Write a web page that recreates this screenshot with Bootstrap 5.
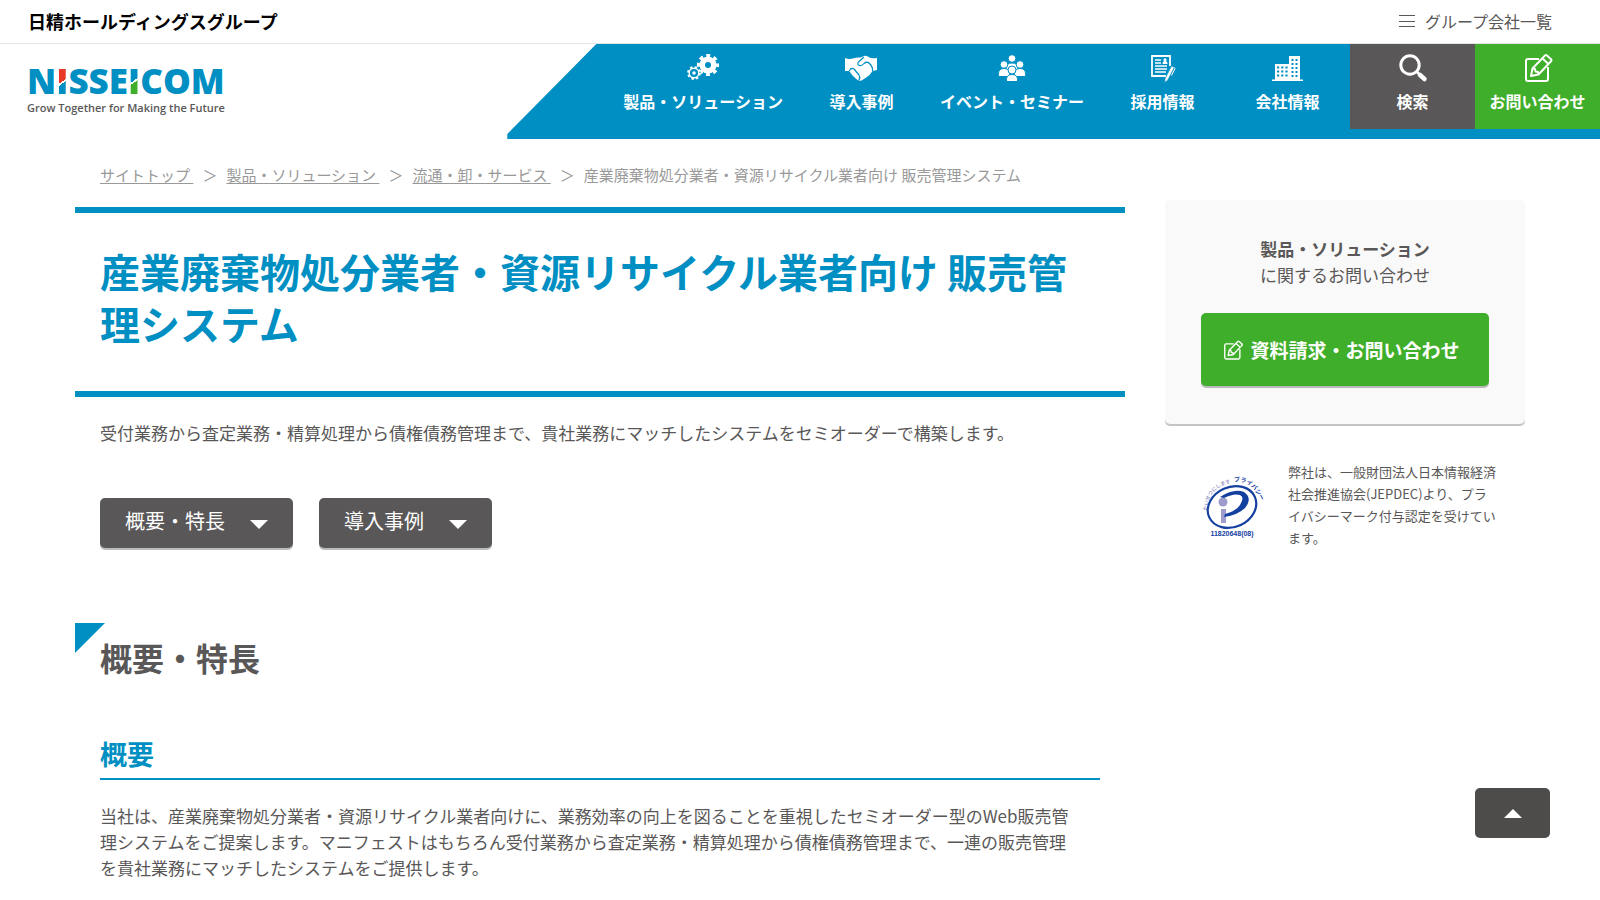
<!DOCTYPE html>
<html lang="ja">
<head>
<meta charset="utf-8">
<meta name="viewport" content="width=device-width, initial-scale=1">
<title>産業廃棄物処分業者・資源リサイクル業者向け 販売管理システム | NISSEICOM</title>
<link href="https://cdn.jsdelivr.net/npm/bootstrap@5.3.0/dist/css/bootstrap.min.css" rel="stylesheet">
<style>
:root { --nc-blue: #008fc2; --nc-green: #3fae2a; --nc-dark: #595757; --nc-red: #e83828; }
body { font-family: "Noto Sans CJK JP", sans-serif; color: var(--nc-dark); font-size: 17px; line-height: 26px; }
a { color: inherit; text-decoration: none; }
.topbar { height: 44px; padding: 0 48px 2px 28px; border-bottom: 1px solid #e6e6e6; }
.group-name { font-size: 18px; font-weight: 700; color: #000; }
.group-link { font-size: 16px; gap: 10px; }
.brand { padding: 17px 0 0 27px; font-family: "Open Sans", sans-serif; }
.brand-name { font-size: 35px; font-weight: 800; line-height: 40px; color: var(--nc-blue); }
.brand-name span { color: transparent; background-clip: text; -webkit-background-clip: text; }
.i-red { background-image: linear-gradient(145deg, var(--nc-red) 52%, #fff 52%, #fff 56%, var(--nc-blue) 56%); }
.i-green { background-image: linear-gradient(145deg, var(--nc-blue) 50%, #fff 50%, #fff 54%, var(--nc-green) 54%); }
.brand-tag { font-size: 11px; font-weight: 600; line-height: 14px; }
.gnav { background: var(--nc-blue); padding: 0 0 10px 100px; clip-path: polygon(89px 0, 100% 0, 100% 100%, 0 100%, 0 calc(100% - 5px)); }
.gnav a { min-width: 125px; height: 85px; padding: 8px 12px 0; color: #fff; font-size: 16px; font-weight: 700; line-height: 24px; white-space: nowrap; }
.gnav a.wide { padding-left: 16px; padding-right: 16px; }
.gnav svg { width: 32px; height: 32px; margin-bottom: 5px; }
.gnav .to-search { background: var(--nc-dark); }
.gnav .to-contact { background: var(--nc-green); }
.page { padding: 0 75px; gap: 40px; }
.side { width: 360px; padding-top: 61px; }
.crumbs { padding: 23px 25px 0; margin-bottom: 19px; font-size: 15px; color: #999; }
.crumbs a { text-decoration: underline; text-underline-offset: 2px; white-space: pre; }
.crumbs li + li::before { content: "＞"; margin: 0 9px; }
.page-title { border: solid var(--nc-blue); border-width: 6px 0; padding: 32px 25px 42px; margin: 0 0 23px; font-size: 40px; line-height: 52px; font-weight: 700; color: var(--nc-blue); }
.inner { padding: 0 25px; }
.jump { gap: 26px; margin-top: 52px; }
.jump a { height: 50px; padding: 0 25px 4px; gap: 25px; font-size: 20px; color: #fff; background: var(--nc-dark); border-radius: 5px; box-shadow: 0 2px 0 #bdbcbc; }
.jump svg { margin-top: 6px; }
.section-title { position: relative; margin: 75px 0 0; padding: 10px 25px 0; font-size: 32px; line-height: 48px; font-weight: 700; }
.section-title::before { content: ""; position: absolute; left: 0; top: 0; width: 30px; height: 30px; background: var(--nc-blue); clip-path: polygon(0 0, 100% 0, 0 100%); }
.sub-title { margin: 53px 0 23px; padding-bottom: 4px; border-bottom: 2px solid var(--nc-blue); font-size: 27px; line-height: 40px; font-weight: 700; color: var(--nc-blue); }
.inquiry { background: #f9f9f9; border-radius: 5px; padding: 36px 36px 38px; box-shadow: 0 2px 0 #c4c4c4; }
.inquiry a { height: 73px; margin-top: 25px; gap: 6px; background: var(--nc-green); color: #fff; font-size: 19px; font-weight: 700; border-radius: 5px; box-shadow: 0 2px 0 #b9b9b9; }
.privacy { padding: 37px 0 0 36px; gap: 20px; font-size: 13px; line-height: 22px; }
.page-top { position: fixed; right: 50px; bottom: 62px; width: 75px; height: 50px; border: 0; border-radius: 5px; background: #4d4c4a; }
</style>
</head>
<body>
<svg class="d-none" aria-hidden="true">
  <symbol id="pen" viewBox="0 0 32 32"><g fill="none" stroke="currentColor" stroke-width="2" stroke-linejoin="round"><path d="M17 7H6Q4 7 4 9v18q0 2 2 2h18q2 0 2-2V15"/><path d="M9 24l1.500-7.500L23 3.500q1-1 2 0l4 3.800q1 1 0 2L16.500 22.500z"/><path d="M10.500 16.500l2.500.5.500 2.500 2.500.500.500 2.500M20.500 6.500l6 5.500"/></g></symbol>
  <symbol id="tri-down" viewBox="0 0 18 9"><path fill="currentColor" d="M0 0h18L9 9z"/></symbol>
</svg>

<div class="topbar d-flex justify-content-between align-items-center">
  <a href="#" class="group-name">日精ホールディングスグループ</a>
  <a href="#" class="group-link d-flex align-items-center">
    <svg width="16" height="14" viewBox="0 0 16 14" stroke="#595757" stroke-width="1"><path d="M0 1.500h16M0 7.500h16M0 12.500h16"/></svg>グループ会社一覧</a>
</div>

<header class="d-flex justify-content-between">
  <a href="#" class="brand d-flex flex-column">
    <span class="brand-name">N<span class="i-red">I</span>SSE<span class="i-green">I</span>COM</span>
    <span class="brand-tag">Grow Together for Making the Future</span>
  </a>
  <nav class="gnav d-flex">
    <a href="#" class="wide d-flex flex-column align-items-center">
      <svg viewBox="0 0 32 32"><circle cx="21" cy="13" r="5.800" fill="none" stroke="#fff" stroke-width="5.500"/><circle cx="21" cy="13" r="9.500" fill="none" stroke="#fff" stroke-width="3.200" stroke-dasharray="3.900 3.561" stroke-dashoffset="2"/><circle cx="7" cy="21" r="6.500" fill="#008fc2"/><circle cx="7" cy="21" r="4.800" fill="none" stroke="#fff" stroke-width="1.400"/><circle cx="7" cy="21" r="6" fill="none" stroke="#fff" stroke-width="1.800" stroke-dasharray="2.400 2.312"/><circle cx="7" cy="21" r="1.800" fill="#fff"/></svg>
      製品・ソリューション</a>
    <a href="#" class="wide d-flex flex-column align-items-center">
      <svg viewBox="0 0 32 32"><path fill="#fff" d="M0 6q4 1.500 8 .500 4-1.500 7.500-1L19 4q2-.8 4 .8Q27 7 32 6v12l-4.500 1-3 4-4 3-4 2.500q-2 .8-4-.5L8 24l-4-5H0z"/><path fill="none" stroke="#008fc2" stroke-width="1.200" stroke-linecap="round" stroke-linejoin="round" d="M27.500 18.500Q28 15 24.500 11.500 22 9 19 11.500q-2 2.500-4.500 2-3-1-1-3.500l5-4.500M4.500 18.500q1.500-3 4.500-1.500l5 6q1.500 2.500 0 5"/></svg>
      導入事例</a>
    <a href="#" class="wide d-flex flex-column align-items-center">
      <svg viewBox="0 0 32 32"><g fill="#fff" stroke="#008fc2" stroke-width="1"><circle cx="16" cy="6.500" r="3.800"/><path d="M10.500 18v-3q0-4 5.500-4t5.500 4v3z"/><circle cx="8" cy="12.500" r="3.800"/><circle cx="24" cy="12.500" r="3.800"/><path d="M2.500 24.500v-3q0-5 5.500-5t5.500 5v3zM18.500 24.500v-3q0-5 5.500-5t5.500 5v3z"/><circle cx="16" cy="18" r="4"/><path d="M10.500 29.500v-2q0-5 5.500-5t5.500 5v2z"/></g></svg>
      イベント・セミナー</a>
    <a href="#" class="d-flex flex-column align-items-center">
      <svg viewBox="0 0 32 32"><path d="M23 14V4H5v20h14" fill="none" stroke="#fff" stroke-width="1.800"/><path d="M8 8h6M8 11h6M8 14h12M8 17h12M8 20h11" stroke="#fff" stroke-width="1.300"/><path d="M15.500 12q0-3 2.500-3t2.500 3z" fill="#fff"/><circle cx="18" cy="7.800" r="1.600" fill="#fff"/><path d="M24.500 14l2.800 1.500-6.500 12.500-3 2.500.3-4z" fill="#fff" stroke="#008fc2" stroke-width=".6"/><path d="M27.500 15.500l.5 1-3.500 7" stroke="#fff" fill="none"/></svg>
      採用情報</a>
    <a href="#" class="d-flex flex-column align-items-center">
      <svg viewBox="0 0 32 32"><path d="M0 29v-1.500h3V12h14V4h11v23.500h3V29z" fill="#fff"/><path d="M5 15.500h11M5 19.500h11M5 23.500h11" stroke="#008fc2" stroke-width="2.200" stroke-dasharray="2.200 2"/><path d="M19.500 8h7M19.500 12h7M19.500 16h7M19.500 20h7M19.500 24h7" stroke="#008fc2" stroke-width="2.200" stroke-dasharray="2 2"/></svg>
      会社情報</a>
    <a href="#" class="to-search d-flex flex-column align-items-center">
      <svg viewBox="0 0 32 32" fill="none" stroke="#fff"><circle cx="13" cy="13" r="9.200" stroke-width="3"/><path d="M19.500 19.500l3 3" stroke-width="2.500"/><path d="M23 23l4.500 4" stroke-width="4.500" stroke-linecap="round"/></svg>
      検索</a>
    <a href="#" class="to-contact d-flex flex-column align-items-center">
      <svg><use href="#pen"/></svg>
      お問い合わせ</a>
  </nav>
</header>

<div class="page d-flex">
  <main class="flex-fill">
    <ol class="crumbs list-unstyled d-flex">
      <li><a href="#">サイトトップ </a></li>
      <li><a href="#">製品・ソリューション </a></li>
      <li><a href="#">流通・卸・サービス </a></li>
      <li>産業廃棄物処分業者・資源リサイクル業者向け 販売管理システム</li>
    </ol>
    <h1 class="page-title">産業廃棄物処分業者・資源リサイクル業者向け 販売管理システム</h1>
    <div class="inner">
      <p class="mb-0">受付業務から査定業務・精算処理から債権債務管理まで、貴社業務にマッチしたシステムをセミオーダーで構築します。</p>
      <div class="jump d-flex">
        <a href="#overview" class="d-flex align-items-center">概要・特長<svg width="18" height="9"><use href="#tri-down"/></svg></a>
        <a href="#cases" class="d-flex align-items-center">導入事例<svg width="18" height="9"><use href="#tri-down"/></svg></a>
      </div>
    </div>
    <h2 class="section-title" id="overview">概要・特長</h2>
    <div class="inner">
      <h3 class="sub-title">概要</h3>
      <p class="mb-0">当社は、産業廃棄物処分業者・資源リサイクル業者向けに、業務効率の向上を図ることを重視したセミオーダー型のWeb販売管<br>理システムをご提案します。マニフェストはもちろん受付業務から査定業務・精算処理から債権債務管理まで、一連の販売管理<br>を貴社業務にマッチしたシステムをご提供します。</p>
    </div>
  </main>
  <aside class="side flex-shrink-0">
    <div class="inquiry text-center">
      <p class="mb-0"><strong>製品・ソリューション</strong><br>に関するお問い合わせ</p>
      <a href="#" class="d-flex align-items-center justify-content-center pe-2"><svg width="22" height="22"><use href="#pen"/></svg>資料請求・お問い合わせ</a>
    </div>
    <div class="privacy d-flex align-items-center">
      <svg class="flex-shrink-0" width="67" height="74" viewBox="0 0 67 74" font-family="Noto Sans CJK JP, sans-serif">
        <defs><path id="arc-left" d="M6 43Q7 18 34 14"/><path id="arc-right" d="M33 14Q50 11 60 33"/></defs>
        <text font-size="5" font-weight="700" fill="#9d9ccc"><textPath href="#arc-left">たいせつにします</textPath></text>
        <text font-size="6" font-weight="700" fill="#1440a0"><textPath href="#arc-right">プライバシー</textPath></text>
        <ellipse cx="31" cy="39" rx="25" ry="20" transform="rotate(-24 31 39)" fill="none" stroke="#1440a0" stroke-width="2.200"/>
        <circle cx="22" cy="34" r="4.500" fill="#9d9ccc"/><path d="M20 41h5v14h-5z" fill="#9d9ccc"/>
        <path d="M19 29q14-9 24-5 9 6 1 16-7 7-21 9l1-3q11-3 15-9 5-8 0-10-6-2-16 3z" fill="#1440a0"/>
        <text x="31" y="68" text-anchor="middle" font-family="Liberation Sans, sans-serif" font-weight="700" font-size="7" fill="#1440a0">11820648(08)</text>
      </svg>
      <p class="mb-0">弊社は、一般財団法人日本情報経済<br>社会推進協会(JEPDEC)より、プラ<br>イバシーマーク付与認定を受けてい<br>ます。</p>
    </div>
  </aside>
</div>

<button type="button" class="page-top d-flex align-items-center justify-content-center text-white" aria-label="ページの先頭へ"><svg width="18" height="9" viewBox="0 0 18 9"><path fill="currentColor" d="M0 9h18L9 0z"/></svg></button>
<script src="https://cdn.jsdelivr.net/npm/bootstrap@5.3.0/dist/js/bootstrap.bundle.min.js"></script>
</body>
</html>
